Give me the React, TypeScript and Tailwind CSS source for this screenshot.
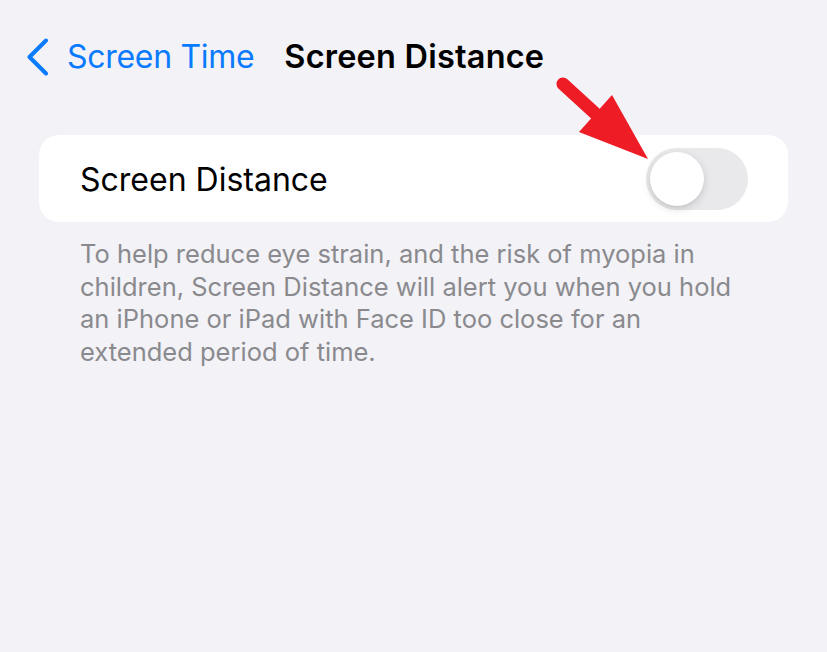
import React from "react";

export default function App() {
  return (
    <div
      className="relative w-[827px] h-[652px] bg-[#f2f2f7] overflow-hidden"
      style={{ fontFamily: "Inter, 'Noto Sans', sans-serif" }}
    >
      {/* Nav bar */}
      <div className="flex items-center h-[40px] mt-[37px] pl-[26px]">
        <svg width="23" height="38" viewBox="0 0 23 38" className="shrink-0">
          <path
            d="M20 2.5 L3.5 19 L20 35.5"
            fill="none"
            stroke="#0a7aff"
            strokeWidth="4"
            strokeLinecap="round"
            strokeLinejoin="round"
          />
        </svg>
        <span className="ml-[18px] text-[32px] leading-none text-[#0a7aff] tracking-[-0.3px]">
          Screen Time
        </span>
        <span className="ml-[30px] text-[32.5px] leading-none font-semibold text-black tracking-[0.2px]">
          Screen Distance
        </span>
      </div>

      {/* Card */}
      <div className="mx-[39px] mt-[58px] h-[87px] rounded-[20px] bg-white flex items-center justify-between pl-[41px] pr-[40px]">
        <span className="text-[32px] leading-none text-black mt-[2px]">
          Screen Distance
        </span>
        <div className="w-[102px] h-[62px] rounded-full bg-[#e9e9eb] p-[4px] flex items-center">
          <div className="w-[54px] h-[54px] rounded-full bg-white shadow-[0_3px_8px_rgba(0,0,0,0.15),0_1px_1px_rgba(0,0,0,0.06)]" />
        </div>
      </div>

      {/* Footer */}
      <p className="pl-[80px] pr-[40px] mt-[16px] text-[25.5px] leading-[32.5px] text-[#8a8a8e]">
        To help reduce eye strain, and the risk of myopia in
        <br />
        children, Screen Distance will alert you when you hold
        <br />
        an iPhone or iPad with Face ID too close for an
        <br />
        extended period of time.
      </p>

      {/* Red arrow annotation */}
      <svg
        className="absolute left-0 top-0 pointer-events-none"
        width="827"
        height="652"
        viewBox="0 0 827 652"
      >
        <line
          x1="563"
          y1="84"
          x2="598"
          y2="116"
          stroke="#ee1c25"
          strokeWidth="13"
          strokeLinecap="round"
        />
        <polygon points="579,132 612,95 648,159" fill="#ee1c25" />
      </svg>
    </div>
  );
}
